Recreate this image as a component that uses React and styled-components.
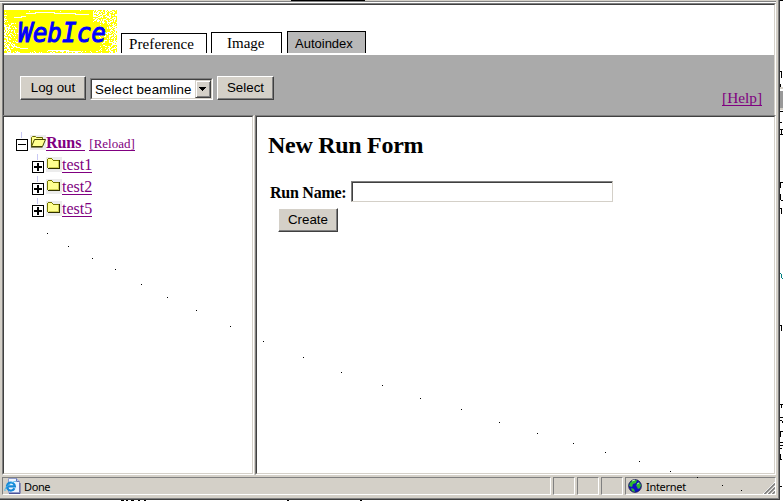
import React from "react";
import styled, { createGlobalStyle } from "styled-components";

const Global = createGlobalStyle`
  * { box-sizing: border-box; }
  html, body { margin: 0; padding: 0; background: #fff; overflow: hidden; }
  body { font-family: "Liberation Serif", "Times New Roman", serif; font-size: 16px; color: #000; }
  svg { display: block; }
`;

const face = "#d4d0c8";
const mid = "#808080";
const dark = "#404040";
const sans = `"Liberation Sans", Arial, sans-serif`;

const Desktop = styled.div`
  position: relative;
  width: 783px;
  height: 501px;
  display: grid;
  grid-template-columns: 780px 3px;
  overflow: hidden;
`;
const Window = styled.div`
  height: 500px;
  display: flex;
  flex-direction: column;
  background: ${face};
  border-right: 1px solid ${dark};
  border-bottom: 1px solid ${dark};
  box-shadow: inset -1px -1px 0 ${mid};
  padding: 0 3px 4px 2px;
`;
const ToolbarEdge = styled.div`
  height: 3px;
  margin: 0 0 0 -2px;
  border-bottom: 1px solid #fff;
  background: linear-gradient(${face} 0 1px, ${mid} 1px 2px);
`;
const ProgressEdge = styled.div`
  width: 74px;
  height: 1px;
  margin-left: 291px;
  background: #000;
`;
const Frame = styled.div`
  border: 1px solid;
  border-color: ${mid} #fff #fff ${mid};
  display: flex;
  min-width: 0;
`;
const FrameInner = styled.div`
  flex: 1;
  min-width: 0;
  background: #fff;
  border: 1px solid;
  border-color: ${dark} ${face} ${face} ${dark};
`;
const Viewport = styled.div`
  height: 473px;
  width: 774px;
  display: flex;
  flex-direction: column;
`;
const TopFrame = styled.div`
  height: 112px;
  border: 1px solid;
  border-color: ${mid} #fff ${mid} ${mid};
  border-bottom: 0;
`;
const TopInner = styled.div`
  height: 111px;
  background: #fff;
  border: 1px solid;
  border-color: ${dark} ${face} #aaa ${dark};
  border-bottom: 0;
`;
const TabRow = styled.div`
  height: 50px;
  display: flex;
  align-items: flex-end;
  padding-bottom: 2px;
`;
const Tab = styled.div`
  width: ${(p) => p.$w}px;
  height: ${(p) => p.$h}px;
  margin-left: ${(p) => p.$gap}px;
  padding-left: ${(p) => p.$pad}px;
  border: 1px solid #000;
  border-bottom: 0;
  background: ${(p) => (p.$active ? "#b8b8b8" : "#fff")};
  font: ${(p) => (p.$active ? `13px/24px ${sans}` : `15px/${p.$lh}px "Liberation Serif", serif`)};
  letter-spacing: ${(p) => p.$ls || 0}px;
  white-space: nowrap;
`;
const Controls = styled.div`
  height: 60px;
  background: #aaa;
  display: flex;
  padding: 21px 12px 0 16px;
`;
const Button = styled.button`
  width: ${(p) => p.$w}px;
  height: 24px;
  flex: none;
  display: block;
  margin: 0;
  padding: 0 0 1px;
  border: 1px solid;
  border-color: #fff ${dark} ${dark} #fff;
  box-shadow: inset -1px -1px 0 ${mid};
  border-radius: 0;
  background: ${face};
  font: 13.33px/21px ${sans};
  color: #000;
`;
const Combo = styled.div`
  width: 123px;
  height: 22px;
  margin: 2px 4px 0 4px;
  border: 1px solid;
  border-color: ${mid} #fff #fff ${mid};
  display: flex;
`;
const ComboInner = styled.div`
  flex: 1;
  display: flex;
  justify-content: space-between;
  background: #fff;
  border: 1px solid;
  border-color: ${dark} ${face} ${face} ${dark};
  padding-left: 3px;
  font: 13.33px/19px ${sans};
  letter-spacing: 0.12px;
  white-space: nowrap;
`;
const Arrow = styled.div`
  width: 16px;
  height: 18px;
  background: ${face};
  border: 1px solid;
  border-color: ${face} ${dark} ${dark} ${face};
  box-shadow: inset 1px 1px 0 #fff, inset -1px -1px 0 ${mid};
  padding: 6px 0 0 3px;
`;
const Link = styled.a`
  color: #800080;
  text-decoration: none;
  border-bottom: 1px solid #800080;
  font-size: ${(p) => p.$size || 16}px;
  font-weight: ${(p) => (p.$bold ? 700 : 400)};
  letter-spacing: ${(p) => p.$ls || 0}px;
  line-height: ${(p) => p.$lh || 19}px;
  height: 18px;
  white-space: pre;
`;
const HelpSlot = styled.div`
  margin-left: auto;
  padding-top: 12px;
  display: flex;
`;
const Split = styled.div`
  flex: 1;
  display: flex;
`;
const TreePane = styled(Frame)`
  width: 252px;
`;
const FormPane = styled(Frame)`
  width: 521px;
  margin-left: 1px;
`;
const Tree = styled(FrameInner)`
  padding: 15px 0 0 12px;
`;
const Node = styled.div`
  height: 22px;
  display: flex;
  padding-left: ${(p) => (p.$child ? 16 : 0)}px;
`;
const Folder = styled.svg`
  margin: 3px 0 0 2px;
  flex: none;
`;
const NodeLabel = styled.div`
  display: flex;
  align-items: flex-end;
  gap: 4px;
  height: 19px;
`;
const Form = styled(FrameInner)`
  padding: 14px 0 0 11px;
`;
const Title = styled.h2`
  margin: 0;
  font-size: 24px;
  line-height: 28px;
  letter-spacing: -0.28px;
`;
const Field = styled.label`
  display: flex;
  margin-top: 22px;
  padding-left: 2px;
  font-weight: 700;
  line-height: 21px;
`;
const FieldName = styled.span`
  width: 81px;
  padding-top: 1px;
  height: 21px;
  letter-spacing: -0.25px;
`;
const Input = styled.input`
  width: 262px;
  height: 21px;
  margin: 0;
  padding: 0 2px;
  outline: 0;
  border: 1px solid;
  border-color: ${mid} ${face} ${face} ${mid};
  border-radius: 0;
  box-shadow: inset 1px 1px 0 ${dark};
  background: #fff;
`;
const Actions = styled.div`
  padding: 6px 0 0 10px;
`;
const Status = styled.div`
  height: 18px;
  margin-top: 2px;
  display: flex;
  gap: 2px;
  font: 11px/17px "Noto Sans", sans-serif;
`;
const Cell = styled.div`
  width: ${(p) => p.$w}px;
  height: 18px;
  border: 1px solid;
  border-color: ${mid} #fff #fff ${mid};
  display: flex;
  padding-left: ${(p) => p.$pad || 0}px;
  gap: ${(p) => p.$gap || 4}px;
  letter-spacing: ${(p) => p.$ls || 0}px;
`;
const Grip = styled.svg`
  margin-left: auto;
  align-self: flex-end;
`;
const Overlay = styled.svg`
  position: absolute;
  inset: 0;
  pointer-events: none;
`;

/* Seeded speckle for the ragged ends of the logo. */
const speckle = (() => {
  let s = 17;
  const rnd = () => ((s = (s * 16807) % 2147483647) / 2147483647);
  let yellow = "";
  for (let y = 0; y < 43; y++) {
    for (let x = 0; x < 113; x++) {
      const r = rnd();
      let chance = 1;
      const leftEdge = y > 12 ? 15 - Math.abs(y - 25) * 0.25 : 4;
      if (x < leftEdge) chance = 0.4 + (x / leftEdge) * 0.5;
      if (x > 104) chance = 0.5;
      if (x > 88 && y < 13) chance = 0.55;
      if (x > 94 && y >= 13) chance = Math.min(chance, 0.78);
      if (y > 40) chance = Math.min(chance, 0.8);
      if (y < 2 && x < 85) chance = 0.96;
      if (r < chance) yellow += `M${x} ${y}h1v1h-1z`;
    }
  }
  return yellow;
})();

const Logo = () => (
  <svg width="114" height="48" viewBox="0 0 114 48" shapeRendering="crispEdges">
    <g transform="translate(0 5)">
      <path d={speckle} fill="#ff0" />
      <path d="M22 3.5h9v-1h19v1h21v1h14M10 7.5h7v-1h5M4 31l5 5 7 2h8M44 40.5h20v1h13" fill="none" stroke="#fff" />
    </g>
    <text x="14" y="36.5" textLength="88" lengthAdjust="spacingAndGlyphs" fontFamily="DejaVu Sans Mono" fontStyle="italic" fontSize="26" fill="#00f" stroke="#00f" strokeWidth="1">WebIce</text>
  </svg>
);

const Toggle = ({ open }) => (
  <svg width="12" height="22" shapeRendering="crispEdges">
    <path d="M5.5 0v6" stroke="#c8c8f4" />
    <rect x=".5" y="7.5" width="11" height="11" fill="#fff" stroke="#000" />
    <path d={open ? "M2 12h8v1H2z" : "M2 12h8v2H2zM5 9h2v8H5z"} />
  </svg>
);

const ClosedFolder = () => (
  <Folder width="16" height="15" shapeRendering="crispEdges">
    <path fill="#ececec" d="M0 0h16v15H0z" />
    <path d="M2 2h4v1h7v8H2z" fill="#ffff90" />
    <path d="M2 1h4v1H2zM1 2h1v9H1zM6 2h1v1H6zM7 3h6v1H7z" fill="#777700" />
    <path d="M13 3h1v9H2v-1h11z" fill="#303000" />
    <path d="M12 4h1v7H3v-1h9z" fill="#d0d050" />
  </Folder>
);
const OpenFolder = () => (
  <Folder width="16" height="15">
    <path fill="#ececec" d="M0 0h16v15H0z" />
    <path d="M1.5 11.5v-9l1-1h3l1 1h6v2" fill="#ffff90" stroke="#666600" />
    <path d="M1.5 11.5l3-7h11l-3 7z" fill="#ffff90" stroke="#444400" />
    <path d="M1 12.2h11.5" stroke="#303000" strokeWidth=".8" />
  </Folder>
);
const PageIcon = () => (
  <svg width="17" height="16">
    <path d="M4.5 .5h8l3 3v11h-11z" fill="#eef3ff" stroke="#8f9ccc" />
    <path d="M12.5 .5v3h3" fill="#bac8f0" stroke="#6675b5" />
    <path d="M5 15.5h11V5" fill="none" stroke="#4b539a" />
    <path d="M10.5 10.3a4 4 0 1 1 .4-2H4" fill="none" stroke="#1689d8" strokeWidth="2.2" />
    <path d="M1 13Q0 10 6 6t6-2" fill="none" stroke="#49b8ee" />
  </svg>
);
const Globe = () => (
  <svg width="14" height="16">
    <circle cx="7" cy="8" r="6.4" fill="#1010c0" stroke="#111133" strokeWidth=".7" />
    <path d="M2 5l3-3 4 0-1 3-3 1-1 3-3-1zM8 7l3-3 2 3-1 3-2 1zM3 10l3 1 1 3-3-1z" fill="#30b830" />
    <path d="M4 3l3-1M9 6l2-1" stroke="#b8f0a8" />
  </svg>
);

const dots = [
  [47, 233], [68, 246], [92, 258], [115, 269], [141, 284], [167, 297], [196, 310], [230, 326],
  [263, 341], [303, 357], [341, 372], [382, 385], [420, 398], [461, 409], [499, 422], [537, 433],
  [573, 443], [605, 452], [639, 461], [670, 471], [697, 477], [722, 485], [741, 490],
];

/* Slivers of the window behind this one. */
const Behind = () => (
  <svg width="3" height="501" shapeRendering="crispEdges">
    <path d="M0 0h3v1H0zM0 71h2v1H0zM1 72h1v6H1zM0 84h1v3H0zM0 111h3v1H0zM0 122h2v1H0zM0 129h3v1H0zM1 130h1v4H1zM0 134h3v1H0zM0 182h3v1H0zM0 183h1v5H0zM0 194h1v6H0zM1 200h2v1H1zM0 208h2v1H0zM1 209h1v5H1zM0 325h2v1H0zM1 326h1v5H1zM0 404h3v1H0zM1 405h1v3H1zM0 417h3v1H0zM0 420h2v1H0zM2 421h1v2H2zM0 431h3v1H0zM0 432h1v5H0zM0 442h3v1H0zM0 445h3v1H0zM0 448h2v1H0zM0 454h1v5H0zM0 459h2v1H0zM0 486h2v1H0z" />
    <path fill={face} d="M0 87h3v2H0zM0 108h3v2H0z" />
    <path fill="#999" d="M0 91h3v17H0z" />
    <path fill="#008080" d="M0 273h1v1H0zM1 274h1v4H1zM2 278h1v1H2z" />
  </svg>
);

export default function App() {
  return (
    <Desktop>
      <Global />
      <Window>
        <ToolbarEdge><ProgressEdge /></ToolbarEdge>
        <Viewport>
          <TopFrame>
            <TopInner>
              <TabRow>
                <Logo />
                <Tab $w={86} $h={20} $gap={3} $pad={7} $lh={20} $ls={0.1}>Preference</Tab>
                <Tab $w={71} $h={21} $gap={4} $pad={15} $lh={20}>Image</Tab>
                <Tab $w={79} $h={22} $gap={5} $pad={7} $active>Autoindex</Tab>
              </TabRow>
              <Controls>
                <Button $w={66}>Log out</Button>
                <Combo>
                  <ComboInner>
                    Select beamline
                    <Arrow><svg width="7" height="4" shapeRendering="crispEdges"><path d="M0 0h7v1H0zM1 1h5v1H1zM2 2h3v1H2zM3 3h1v1H3z" /></svg></Arrow>
                  </ComboInner>
                </Combo>
                <Button $w={57}>Select</Button>
                <HelpSlot><Link href="#" $size={15.3}>[Help]</Link></HelpSlot>
              </Controls>
            </TopInner>
          </TopFrame>
          <Split>
            <TreePane>
              <Tree>
                <Node>
                  <Toggle open />
                  <OpenFolder />
                  <NodeLabel>
                    <Link href="#" $bold $ls={-0.05}>{"Runs "}</Link>
                    <Link href="#" $size={13} $lh={21}>[Reload]</Link>
                  </NodeLabel>
                </Node>
                {["test1", "test2", "test5"].map((name) => (
                  <Node key={name} $child>
                    <Toggle />
                    <ClosedFolder />
                    <NodeLabel><Link href="#">{name}</Link></NodeLabel>
                  </Node>
                ))}
              </Tree>
            </TreePane>
            <FormPane>
              <Form>
                <Title>New Run Form</Title>
                <Field><FieldName>Run Name:</FieldName><Input /></Field>
                <Actions><Button $w={60}>Create</Button></Actions>
              </Form>
            </FormPane>
          </Split>
        </Viewport>
        <Status>
          <Cell $w={549} $pad={1} $gap={3} $ls={-0.4}><PageIcon />Done</Cell>
          <Cell $w={22} />
          <Cell $w={22} />
          <Cell $w={22} />
          <Cell $w={151} $pad={2} $ls={-0.3}>
            <Globe />Internet
            <Grip width="13" height="13">
              <path d="M1 13L13 1M5 13l8-8M9 13l4-4" stroke="#fff" />
              <path d="M2.5 13L13 2.5M6.5 13L13 6.5M10.5 13l2.5-2.5" stroke="#808080" strokeWidth="1.6" />
            </Grip>
          </Cell>
        </Status>
      </Window>
      <Behind />
      <Overlay width="783" height="501" shapeRendering="crispEdges">
        {dots.map(([x, y]) => <rect key={x} x={x} y={y} width="1" height="1" />)}
        <path d="M121 500h3v1h-3zM126 500h2v1h-2zM131 500h3v1h-3zM138 500h2v1h-2zM144 500h2v1h-2zM287 500h2v1h-2zM360 500h2v1h-2z" />
      </Overlay>
    </Desktop>
  );
}
